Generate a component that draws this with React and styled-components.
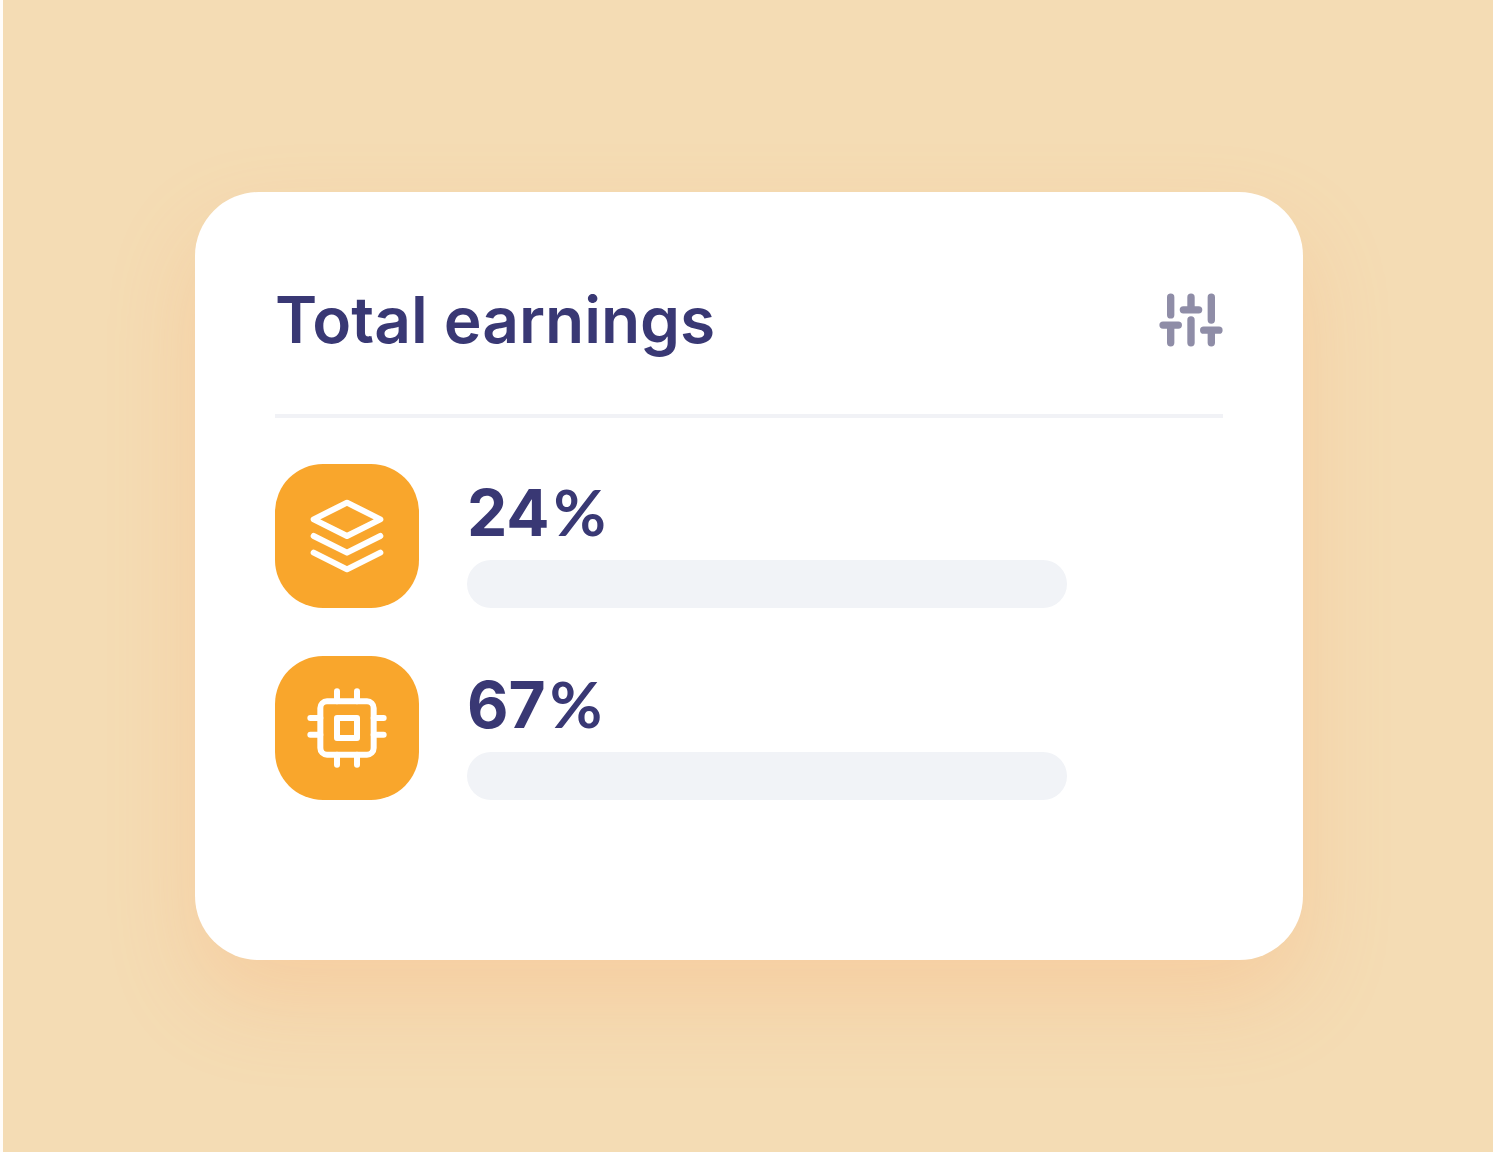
import React from "react";
import styled, { createGlobalStyle } from "styled-components";

const GlobalStyle = createGlobalStyle`
  *, *::before, *::after { box-sizing: border-box; }
  body {
    margin: 0;
    background: #f4dcb4;
    font-family: Inter, "Liberation Sans", sans-serif;
    color: #393874;
  }
`;

const Stage = styled.main`
  min-height: 100vh;
  padding: 192px 190px 192px 192px;
  border-left: 3px solid #fffdfa;
  background: #f4dcb4;
`;

const Card = styled.section`
  padding: 80px 80px 160px;
  border-radius: 64px;
  background: #fff;
  box-shadow: 0 40px 88px rgba(255, 154, 92, 0.22);
`;

const Header = styled.header`
  display: flex;
  align-items: center;
  justify-content: space-between;
  padding-bottom: 46px;
  border-bottom: 4px solid #f1f2f6;
`;

const Title = styled.h1`
  margin: 0;
  font-size: 64px;
  font-weight: 600;
  line-height: 96px;
`;

const FilterButton = styled.button`
  display: flex;
  padding: 0;
  border: 0;
  background: none;
  color: #8f8da7;
  cursor: pointer;
`;

const StatList = styled.ul`
  display: flex;
  flex-direction: column;
  gap: 48px;
  margin: 46px 0 0;
  padding: 0;
  list-style: none;
`;

const Stat = styled.li`
  display: flex;
  gap: 48px;
`;

const Tile = styled.div`
  display: flex;
  flex: none;
  align-items: center;
  justify-content: center;
  width: 144px;
  height: 144px;
  border-radius: 48px;
  background: #f9a62c;
  color: #fff;
`;

const StatBody = styled.div`
  flex: 1;
  max-width: 600px;
`;

const Value = styled.p`
  height: 96px;
  margin: 0;
  font-size: 64px;
  font-weight: 700;
  line-height: 96px;
`;

const Unit = styled.span`
  margin-left: 4px;
  font-family: Lato, Inter, sans-serif;
`;

const Track = styled.div`
  height: 48px;
  border-radius: 24px;
  background: #f1f3f7;
`;

const Icon = styled.svg`
  display: block;
  fill: none;
  stroke: currentColor;
  stroke-linecap: round;
  stroke-linejoin: round;
`;

const SlidersIcon = () => (
  <Icon width="64" height="64" viewBox="-0.6 -0.6 25.2 25.2" strokeWidth="2.9" aria-hidden="true">
    <path d="M4 21v-7M4 10V3M12 21v-9M12 8V3M20 21v-5M20 12V3M1 14h6M9 8h6M17 16h6" />
  </Icon>
);

const LayersIcon = () => (
  <Icon width="80" height="80" viewBox="0 0 24 24" strokeWidth="1.8" aria-hidden="true">
    <path d="M12 2 2 7l10 5 10-5-10-5zM2 17l10 5 10-5M2 12l10 5 10-5" />
  </Icon>
);

const ChipIcon = () => (
  <Icon width="80" height="80" viewBox="0 0 24 24" strokeWidth="1.8" aria-hidden="true">
    <rect x="4" y="4" width="16" height="16" rx="2" />
    <rect x="9" y="9" width="6" height="6" />
    <path d="M9 1v3M15 1v3M9 20v3M15 20v3M20 9h3M20 14h3M1 9h3M1 14h3" />
  </Icon>
);

const stats = [
  { percent: 24, Glyph: LayersIcon },
  { percent: 67, Glyph: ChipIcon },
];

export default function App() {
  return (
    <>
      <GlobalStyle />
      <Stage>
        <Card aria-labelledby="earnings-title">
          <Header>
            <Title id="earnings-title">Total earnings</Title>
            <FilterButton type="button" aria-label="Filter">
              <SlidersIcon />
            </FilterButton>
          </Header>
          <StatList>
            {stats.map(({ percent, Glyph }) => (
              <Stat key={percent}>
                <Tile>
                  <Glyph />
                </Tile>
                <StatBody>
                  <Value>
                    {percent}
                    <Unit>%</Unit>
                  </Value>
                  <Track />
                </StatBody>
              </Stat>
            ))}
          </StatList>
        </Card>
      </Stage>
    </>
  );
}
